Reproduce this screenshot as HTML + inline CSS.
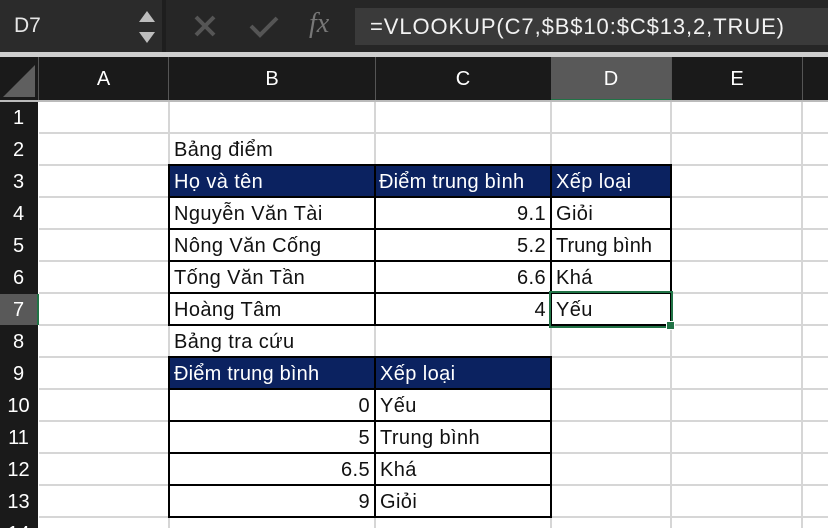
<!DOCTYPE html>
<html style="width:828px;height:528px;overflow:hidden"><head><meta charset="utf-8"><style>
*{margin:0;padding:0;box-sizing:border-box}
body{width:828px;height:528px;overflow:hidden;background:#fff;position:relative;font-family:"Liberation Sans",sans-serif}
.a{position:absolute}
.t{position:absolute;height:32px;line-height:33px;font-size:20px;letter-spacing:0.4px;color:#111;white-space:nowrap}
.w{color:#fff}
.r{text-align:right}
.hl{position:absolute;height:2px;background:#d6d6d6}
.vl{position:absolute;width:2px;background:#d6d6d6}
.bk{background:#000}
.rh{position:absolute;left:0;width:37px;height:31px;line-height:32px;color:#fff;font-size:20px;text-align:center;background:#1a1a1a}
.ch{position:absolute;top:57px;height:43px;line-height:45px;color:#fff;font-size:20px;text-align:center;background:#1a1a1a}
</style></head><body>
<div class="a" style="left:0;top:0;width:828px;height:52px;background:#262626"></div>
<div class="a" style="left:0;top:0;width:162px;height:52px;background:#2b2b2b"></div>
<div class="a" style="left:14px;top:14px;color:#e6e6e6;font-size:21px">D7</div>
<svg class="a" style="left:138px;top:8px" width="18" height="38"><path d="M1 14 L9 3 L17 14Z M1 24 L9 35 L17 24Z" fill="#bdbdbd"/></svg>
<div class="a" style="left:162px;top:0;width:4px;height:52px;background:#1e1e1e"></div>
<svg class="a" style="left:192px;top:13px" width="26" height="26"><path d="M4 4 L22 22 M22 4 L4 22" stroke="#555" stroke-width="4"/></svg>
<svg class="a" style="left:248px;top:13px" width="32" height="26"><path d="M3 13 L12 22 L29 5" stroke="#555" stroke-width="4" fill="none"/></svg>
<div class="a" style="left:309px;top:8px;color:#777;font-size:28px;font-style:italic;font-family:'Liberation Serif',serif">fx</div>
<div class="a" style="left:355px;top:8px;width:473px;height:37px;background:#3a3a3a"></div>
<div class="a" style="left:370px;top:14px;color:#f2f2f2;font-size:22px;letter-spacing:0.9px;white-space:nowrap">=VLOOKUP(C7,$B$10:$C$13,2,TRUE)</div>
<div class="a" style="left:0;top:52px;width:828px;height:5px;background:#cfcfcf"></div>
<div class="a" style="left:0;top:57px;width:828px;height:44px;background:#1a1a1a"></div>
<svg class="a" style="left:3px;top:65px" width="32" height="32"><path d="M32 0 L32 32 L0 32Z" fill="#5f5f5f"/></svg>
<div class="ch" style="left:39px;width:129px">A</div>
<div class="ch" style="left:170px;width:204px">B</div>
<div class="ch" style="left:376px;width:174px">C</div>
<div class="ch" style="left:551px;width:120px;background:#595959">D</div>
<div class="a" style="left:551px;top:99px;width:120px;height:2px;background:#217346"></div>
<div class="ch" style="left:673px;width:128px">E</div>
<div class="a" style="left:38px;top:57px;width:1px;height:44px;background:#555"></div>
<div class="a" style="left:168px;top:57px;width:1px;height:44px;background:#555"></div>
<div class="a" style="left:375px;top:57px;width:1px;height:44px;background:#555"></div>
<div class="a" style="left:671px;top:57px;width:1px;height:44px;background:#555"></div>
<div class="a" style="left:802px;top:57px;width:1px;height:44px;background:#555"></div>
<div class="a" style="left:0;top:100px;width:828px;height:2px;background:#bbb"></div>
<div class="a" style="left:0;top:102px;width:38px;height:426px;background:#1a1a1a"></div>
<div class="rh" style="top:102px">1</div><div class="rh" style="top:134px">2</div><div class="rh" style="top:166px">3</div><div class="rh" style="top:198px">4</div><div class="rh" style="top:230px">5</div><div class="rh" style="top:262px">6</div><div class="rh" style="top:294px;background:#595959">7</div><div class="rh" style="top:326px">8</div><div class="rh" style="top:358px">9</div><div class="rh" style="top:390px">10</div><div class="rh" style="top:422px">11</div><div class="rh" style="top:454px">12</div><div class="rh" style="top:486px">13</div><div class="rh" style="top:518px;height:10px;overflow:hidden">14</div>
<div class="a" style="left:37px;top:294px;width:2px;height:31px;background:#217346"></div>
<div class="hl" style="left:39px;width:789px;top:132px"></div><div class="hl" style="left:39px;width:789px;top:164px"></div><div class="hl" style="left:39px;width:789px;top:196px"></div><div class="hl" style="left:39px;width:789px;top:228px"></div><div class="hl" style="left:39px;width:789px;top:260px"></div><div class="hl" style="left:39px;width:789px;top:292px"></div><div class="hl" style="left:39px;width:789px;top:324px"></div><div class="hl" style="left:39px;width:789px;top:356px"></div><div class="hl" style="left:39px;width:789px;top:388px"></div><div class="hl" style="left:39px;width:789px;top:420px"></div><div class="hl" style="left:39px;width:789px;top:452px"></div><div class="hl" style="left:39px;width:789px;top:484px"></div><div class="hl" style="left:39px;width:789px;top:516px"></div>
<div class="vl" style="left:168px;top:102px;height:426px"></div><div class="vl" style="left:374px;top:102px;height:426px"></div><div class="vl" style="left:550px;top:102px;height:426px"></div><div class="vl" style="left:670px;top:102px;height:426px"></div><div class="vl" style="left:801px;top:102px;height:426px"></div>
<div class="a" style="left:169px;top:165px;width:502px;height:32px;background:#0b2260"></div>
<div class="a" style="left:169px;top:357px;width:382px;height:32px;background:#0b2260"></div>
<div class="a bk" style="left:168px;top:164px;width:504px;height:2px"></div>
<div class="a bk" style="left:168px;top:196px;width:504px;height:2px"></div>
<div class="a bk" style="left:168px;top:228px;width:504px;height:2px"></div>
<div class="a bk" style="left:168px;top:260px;width:504px;height:2px"></div>
<div class="a bk" style="left:168px;top:292px;width:504px;height:2px"></div>
<div class="a bk" style="left:168px;top:324px;width:504px;height:2px"></div>
<div class="a bk" style="left:168px;top:164px;width:2px;height:162px"></div>
<div class="a bk" style="left:374px;top:164px;width:2px;height:162px"></div>
<div class="a bk" style="left:550px;top:164px;width:2px;height:162px"></div>
<div class="a bk" style="left:670px;top:164px;width:2px;height:162px"></div>
<div class="a bk" style="left:168px;top:356px;width:384px;height:2px"></div>
<div class="a bk" style="left:168px;top:388px;width:384px;height:2px"></div>
<div class="a bk" style="left:168px;top:420px;width:384px;height:2px"></div>
<div class="a bk" style="left:168px;top:452px;width:384px;height:2px"></div>
<div class="a bk" style="left:168px;top:484px;width:384px;height:2px"></div>
<div class="a bk" style="left:168px;top:516px;width:384px;height:2px"></div>
<div class="a bk" style="left:168px;top:356px;width:2px;height:162px"></div>
<div class="a bk" style="left:374px;top:356px;width:2px;height:162px"></div>
<div class="a bk" style="left:550px;top:356px;width:2px;height:162px"></div>
<div class="t" style="left:174px;top:134px">Bảng điểm</div>
<div class="t w" style="left:174px;top:166px">Họ và tên</div>
<div class="t w" style="left:379px;top:166px;letter-spacing:0.2px">Điểm trung bình</div>
<div class="t w" style="left:556px;top:166px">Xếp loại</div>
<div class="t" style="left:174px;top:198px">Nguyễn Văn Tài</div>
<div class="t" style="left:174px;top:230px">Nông Văn Cống</div>
<div class="t" style="left:174px;top:262px">Tống Văn Tần</div>
<div class="t" style="left:174px;top:294px">Hoàng Tâm</div>
<div class="t r" style="left:376px;width:170px;top:198px">9.1</div>
<div class="t r" style="left:376px;width:170px;top:230px">5.2</div>
<div class="t r" style="left:376px;width:170px;top:262px">6.6</div>
<div class="t r" style="left:376px;width:170px;top:294px">4</div>
<div class="t" style="left:556px;top:198px">Giỏi</div>
<div class="t" style="left:556px;top:230px;letter-spacing:0">Trung bình</div>
<div class="t" style="left:556px;top:262px">Khá</div>
<div class="t" style="left:556px;top:294px">Yếu</div>
<div class="t" style="left:174px;top:326px">Bảng tra cứu</div>
<div class="t w" style="left:174px;top:358px;letter-spacing:0.2px">Điểm trung bình</div>
<div class="t w" style="left:380px;top:358px">Xếp loại</div>
<div class="t r" style="left:170px;width:200px;top:390px">0</div>
<div class="t r" style="left:170px;width:200px;top:422px">5</div>
<div class="t r" style="left:170px;width:200px;top:454px">6.5</div>
<div class="t r" style="left:170px;width:200px;top:486px">9</div>
<div class="t" style="left:380px;top:390px">Yếu</div>
<div class="t" style="left:380px;top:422px">Trung bình</div>
<div class="t" style="left:380px;top:454px">Khá</div>
<div class="t" style="left:380px;top:486px">Giỏi</div>
<div class="a" style="left:549px;top:291px;width:124px;height:37px;border:2px solid #217346"></div>
<div class="a" style="left:666px;top:321px;width:9px;height:9px;background:#217346;border:1px solid #fff"></div>
</body></html>
